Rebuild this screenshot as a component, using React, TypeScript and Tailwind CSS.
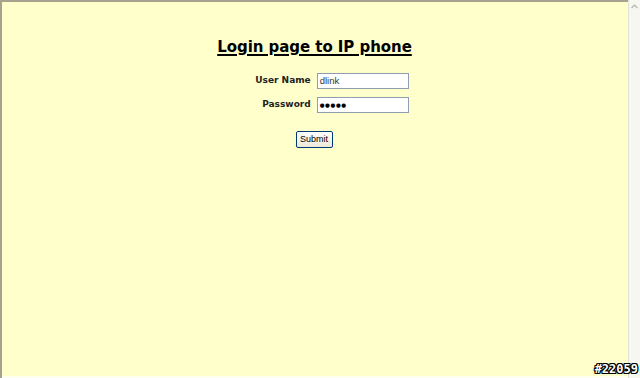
import React from "react";

export default function App() {
  return (
    <div className="relative w-[640px] h-[378px] overflow-hidden flex bg-[#ffffcc]" style={{ fontFamily: '"DejaVu Sans", Verdana, sans-serif' }}>
      <div className="w-[2px] h-full bg-[#a5a38f]" />
      <div className="flex-1 flex flex-col">
        <div className="h-[2px] w-full bg-[#a5a38f]" />
        <div className="flex-1 flex flex-col items-center pt-[35px]">
          <h1 className="text-[15px] font-bold underline underline-offset-[2px] decoration-[1.5px] text-black leading-[20px] tracking-[-0.05px] ml-[-1px]">Login page to IP phone</h1>
          <div className="mt-[16px] ml-[34px] grid grid-cols-[auto_auto] gap-x-[6px] gap-y-[8px] items-center">
            <div className="text-[9px] font-bold text-[#222] text-right">User Name</div>
            <div className="w-[92px] h-[16px] border border-[#8f9fb0] bg-white px-[2px] text-[9.5px] leading-[14px] text-[#333]" style={{ fontFamily: '"Liberation Sans", Arial, sans-serif' }}>dlink</div>
            <div className="text-[9px] font-bold text-[#222] text-right">Password</div>
            <div className="w-[92px] h-[16px] border border-[#8f9fb0] bg-white px-[2px] text-[5.5px] leading-[14px] text-black tracking-[0.6px]">●●●●●</div>
          </div>
          <div className="mt-[18px] ml-[-2px] w-[37px] h-[17px] rounded-[2px] border border-[#003c74] bg-gradient-to-b from-white to-[#ece9d8] text-[9px] leading-[15px] text-center text-black" style={{ fontFamily: '"Liberation Sans", Arial, sans-serif' }}>Submit</div>
        </div>
        <div className="h-[2px] w-full bg-[#fffff0]" />
      </div>
      <div className="w-[12px] h-full bg-[#f7f7f2] border-l border-[#e2e2d6] flex flex-col items-center pt-[2px]">
        <svg width="9" height="9" viewBox="0 0 9 9"><path d="M1.5 6 L4.5 3 L7.5 6" fill="none" stroke="#b5b5b0" strokeWidth="1.2" /></svg>
      </div>
      <div className="absolute right-[2px] bottom-[3px] text-[12px] font-bold text-white leading-none" style={{ fontFamily: '"DejaVu Sans Mono", monospace', textShadow: "1px 0 #000, -1px 0 #000, 0 1px #000, 0 -1px #000, 1px 1px #000, -1px -1px #000, 1px -1px #000, -1px 1px #000" }}>#22059</div>
    </div>
  );
}
